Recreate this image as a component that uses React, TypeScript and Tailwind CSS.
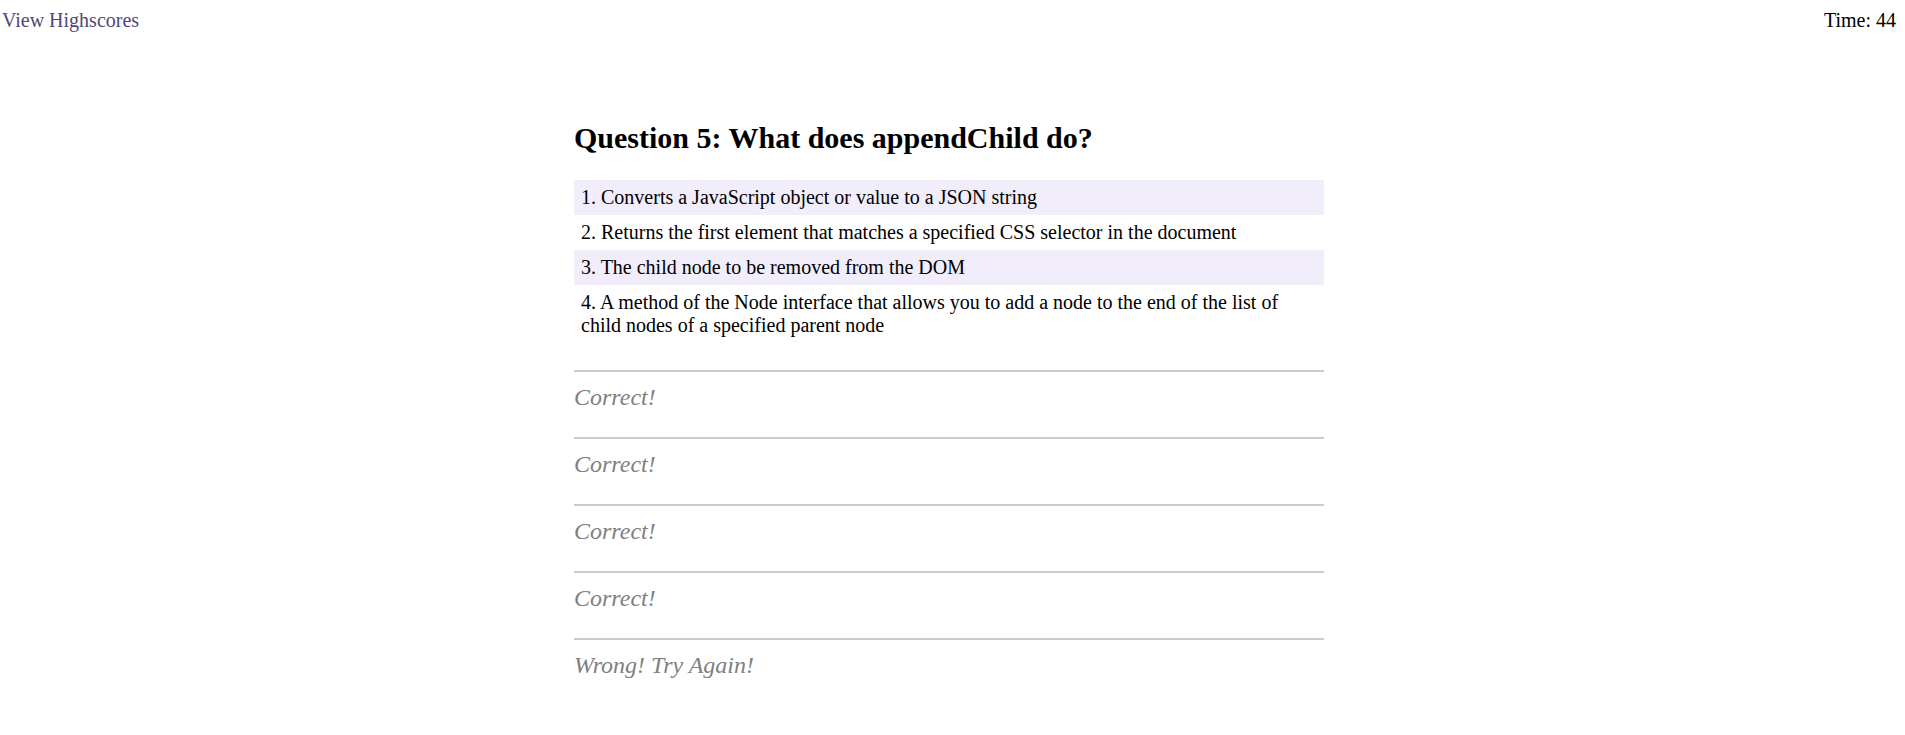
const answers = [
  "1. Converts a JavaScript object or value to a JSON string",
  "2. Returns the first element that matches a specified CSS selector in the document",
  "3. The child node to be removed from the DOM",
  "4. A method of the Node interface that allows you to add a node to the end of the list of child nodes of a specified parent node",
];

const feedback = ["Correct!", "Correct!", "Correct!", "Correct!", "Wrong! Try Again!"];

const App = () => {
  return (
    <div className="min-h-screen bg-white text-black font-['Liberation_Serif','Times_New_Roman',serif] text-[20px]">
      {/* Top bar */}
      <header className="flex justify-between pt-[9px] pl-[2px] pr-[9px] leading-[23px]">
        <a href="#" className="text-[#4f4878]">
          View Highscores
        </a>
        <span>Time: 44</span>
      </header>

      <div className="flex justify-center pr-[7px]">
        <main className="w-[750px] pt-[89px]">
          <h2 className="text-[30px] font-bold leading-[34px]">
            Question 5: What does appendChild do?
          </h2>

          {/* Answer choices */}
          <ul className="mt-[25px]">
            {answers.map((a, i) => (
              <li
                key={i}
                className={`px-[7px] py-[6px] leading-[23px] ${i % 2 === 0 ? "bg-[#f1edfb]" : ""}`}
              >
                {a}
              </li>
            ))}
          </ul>

          {/* Results */}
          <div className="mt-[27px]">
            {feedback.map((f, i) => (
              <div key={i} className="border-t-2 border-[#cccccc] pt-[11px] pb-[26px]">
                <p className="text-[24px] italic leading-[28px] text-[#808080]">{f}</p>
              </div>
            ))}
          </div>
        </main>
      </div>
    </div>
  );
};

export default App;
